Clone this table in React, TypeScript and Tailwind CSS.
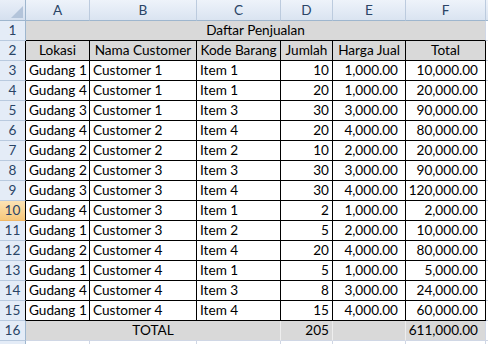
import React from 'react';

// column widths include the 1px right border line
const W = {
  hdr: 'w-[26px]',
  A: 'w-[64px]',
  B: 'w-[107px]',
  C: 'w-[84px]',
  D: 'w-[52px]',
  E: 'w-[73px]',
  F: 'w-[80px]',
};

const data = [
  ['Gudang 1', 'Customer 1', 'Item 1', '10', '1,000.00', '10,000.00'],
  ['Gudang 4', 'Customer 1', 'Item 1', '20', '1,000.00', '20,000.00'],
  ['Gudang 3', 'Customer 1', 'Item 3', '30', '3,000.00', '90,000.00'],
  ['Gudang 4', 'Customer 2', 'Item 4', '20', '4,000.00', '80,000.00'],
  ['Gudang 2', 'Customer 2', 'Item 2', '10', '2,000.00', '20,000.00'],
  ['Gudang 2', 'Customer 3', 'Item 3', '30', '3,000.00', '90,000.00'],
  ['Gudang 3', 'Customer 3', 'Item 4', '30', '4,000.00', '120,000.00'],
  ['Gudang 4', 'Customer 3', 'Item 1', '2', '1,000.00', '2,000.00'],
  ['Gudang 1', 'Customer 3', 'Item 2', '5', '2,000.00', '10,000.00'],
  ['Gudang 2', 'Customer 4', 'Item 4', '20', '4,000.00', '80,000.00'],
  ['Gudang 1', 'Customer 4', 'Item 1', '5', '1,000.00', '5,000.00'],
  ['Gudang 4', 'Customer 4', 'Item 3', '8', '3,000.00', '24,000.00'],
  ['Gudang 1', 'Customer 4', 'Item 4', '15', '4,000.00', '60,000.00'],
];

const RowHead: React.FC<{ n?: number; dark?: boolean; active?: boolean }> = ({ n, dark, active }) => (
  <div
    className={`${W.hdr} shrink-0 flex items-center justify-center border-b border-r ${
      dark ? 'border-r-black' : 'border-r-[#9eb6ce]'
    } ${
      active
        ? 'bg-linear-to-b from-[#fbe3b4] to-[#f6c77a] border-b-[#f0b766]'
        : 'bg-[#e4ecf7] border-b-[#b9cadf]'
    } text-[#2a4466]`}
  >
    {n}
  </div>
);

const App: React.FC = () => {
  const cell = 'shrink-0 flex items-center border-r border-b border-black px-[3px] whitespace-nowrap overflow-hidden';

  return (
    <div
      className="w-[488px] h-[344px] overflow-hidden bg-white text-[13.6px] text-black"
      style={{ fontFamily: 'Lato, "Liberation Sans", sans-serif' }}
    >
      {/* column letters */}
      <div className="flex h-[21px]">
        <div className={`${W.hdr} shrink-0 relative border-r border-b border-[#9eb6ce] bg-linear-to-b from-[#e9eff8] to-[#d5e0ef]`}>
          <svg className="absolute right-[2px] bottom-[2px]" width="12" height="12" viewBox="0 0 12 12">
            <polygon points="12,0 12,12 0,12" fill="#b3c4da" />
          </svg>
        </div>
        {[
          [W.A, 'A'],
          [W.B, 'B'],
          [W.C, 'C'],
          [W.D, 'D'],
          [W.E, 'E'],
          [W.F, 'F'],
        ].map(([w, l]) => (
          <div
            key={l}
            className={`${w} shrink-0 flex items-center justify-center border-r border-r-[#bccbde] border-b border-b-[#9eb6ce] bg-linear-to-b from-[#eef3fa] to-[#dae4f1] text-[#2a4466]`}
          >
            {l}
          </div>
        ))}
        <div className="flex-1 border-b border-[#9eb6ce] bg-linear-to-b from-[#eef3fa] to-[#dae4f1]" />
      </div>

      {/* row 1 title */}
      <div className="flex h-[20px]">
        <RowHead n={1} />
        <div className="w-[460px] shrink-0 flex items-center justify-center border-r border-r-[#d0d7e5] border-b border-b-black bg-[#d9d9d9]">
          Daftar Penjualan
        </div>
        <div className="flex-1 border-b border-[#d0d7e5]" />
      </div>

      {/* row 2 headings */}
      <div className="flex h-[20px]">
        <RowHead n={2} dark />
        <div className={`${W.A} ${cell} justify-center bg-[#d9d9d9]`}>Lokasi</div>
        <div className={`${W.B} ${cell} justify-center bg-[#d9d9d9]`}>Nama Customer</div>
        <div className={`${W.C} ${cell} justify-center bg-[#d9d9d9]`}>Kode Barang</div>
        <div className={`${W.D} ${cell} justify-center bg-[#d9d9d9]`}>Jumlah</div>
        <div className={`${W.E} ${cell} justify-center bg-[#d9d9d9]`}>Harga Jual</div>
        <div className={`${W.F} ${cell} justify-center bg-[#d9d9d9]`}>Total</div>
        <div className="flex-1 border-b border-[#d0d7e5]" />
      </div>

      {data.map((r, i) => (
        <div key={i} className="flex h-[20px]">
          <RowHead n={i + 3} dark active={i + 3 === 10} />
          <div className={`${W.A} ${cell}`}>{r[0]}</div>
          <div className={`${W.B} ${cell}`}>{r[1]}</div>
          <div className={`${W.C} ${cell}`}>{r[2]}</div>
          <div className={`${W.D} ${cell} justify-end`}>{r[3]}</div>
          <div className={`${W.E} ${cell} justify-end pr-[7px]`}>{r[4]}</div>
          <div className={`${W.F} ${cell} justify-end pr-[7px]`}>{r[5]}</div>
          <div className="flex-1 border-b border-[#d0d7e5]" />
        </div>
      ))}

      {/* row 16 total */}
      <div className="flex h-[20px]">
        <RowHead n={16} />
        <div className="w-[255px] shrink-0 flex items-center justify-center border-r border-r-[#eeeeee] border-b border-b-[#d0d7e5] bg-[#d9d9d9]">
          TOTAL
        </div>
        <div className={`${W.D} shrink-0 flex items-center justify-end px-[3px] border-r border-r-[#eeeeee] border-b border-b-[#d0d7e5] bg-[#d9d9d9]`}>
          205
        </div>
        <div className={`${W.E} shrink-0 border-r border-r-[#eeeeee] border-b border-b-[#d0d7e5] bg-[#d9d9d9]`} />
        <div className={`${W.F} shrink-0 flex items-center justify-end pr-[7px] border-r border-r-[#d0d7e5] border-b border-b-[#d0d7e5] bg-[#d9d9d9]`}>
          611,000.00
        </div>
        <div className="flex-1 border-b border-[#d0d7e5]" />
      </div>

      {/* next row, only a sliver is visible */}
      <div className="flex h-[20px]">
        <RowHead />
        {[W.A, W.B, W.C, W.D, W.E, W.F].map((w, i) => (
          <div key={i} className={`${w} shrink-0 border-r border-b border-[#d0d7e5]`} />
        ))}
        <div className="flex-1 border-b border-[#d0d7e5]" />
      </div>
    </div>
  );
};

export default App;
